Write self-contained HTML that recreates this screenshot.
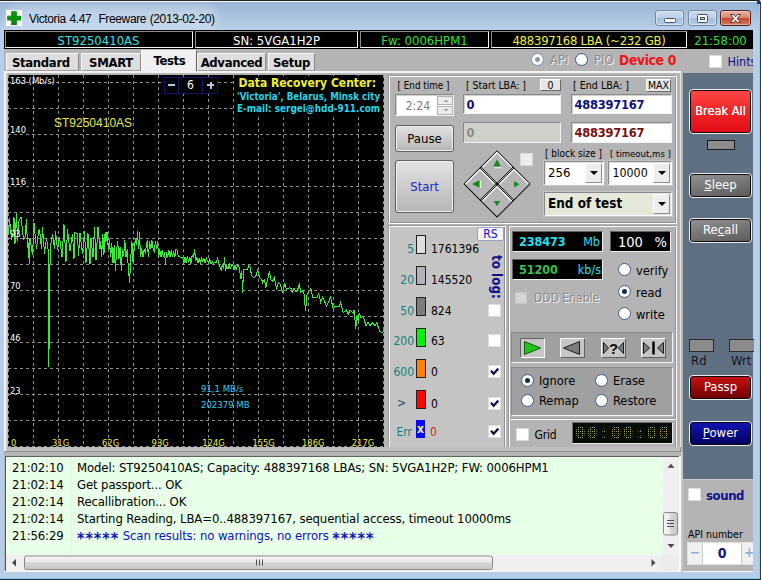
<!DOCTYPE html>
<html lang="en"><head><meta charset="utf-8"><title>Victoria 4.47 Freeware (2013-02-20)</title>
<style>
html,body{margin:0;padding:0;}
body{width:762px;height:580px;overflow:hidden;background:#fff;position:relative;
 font-family:"DejaVu Sans Condensed","DejaVu Sans","Liberation Sans",sans-serif;font-stretch:condensed;font-size:13px;color:#000;}
div,span{box-sizing:border-box;}
.a{position:absolute;white-space:nowrap;}
#win{left:0;top:0;width:761px;height:580px;background:#b6ceea;border-radius:0 3px 0 0;overflow:hidden;}
#frame-top{left:0;top:0;width:761px;height:1px;background:#222;}
#frame-top2{left:0;top:1px;width:760px;height:1px;background:#f4f8fc;}
#frame-right{left:760px;top:3px;width:1px;height:577px;background:#2a3a4c;}
#frame-right2{left:758.5px;top:3px;width:1.5px;height:575px;background:#84d2f0;}
#frame-bot{left:0;top:579px;width:761px;height:1px;background:#1b2a3a;}
#frame-bot2{left:0;top:577.7px;width:760px;height:1.3px;background:#78cce8;}
#titlebar{left:0;top:2px;width:759px;height:28px;background:linear-gradient(#99b4d4,#b9cfe9);}
#client{left:4px;top:30px;width:749px;height:542px;background:#b4b4b4;}
#ttl{left:29px;top:9px;font-family:"Liberation Sans",sans-serif;font-size:12px;letter-spacing:-0.37px;word-spacing:0.6px;color:#000;line-height:20px;}
.sb{background:#000;border:1px solid;border-color:#8c8c8c #f4f4f4 #f4f4f4 #8c8c8c;height:17px;top:31px;text-align:center;font-size:13px;line-height:17px;}
.capb{height:16px;border:1px solid #7488a2;border-radius:3px;background:linear-gradient(#c8d9ee 0%,#bfd2ea 48%,#a6c0de 52%,#b4cbe6 100%);box-shadow:inset 0 0 0 1px rgba(255,255,255,.45);}
.capb svg{position:absolute;left:0;top:0;}
.capx{background:linear-gradient(#e8b0a0 0%,#dc8a76 46%,#c4482e 52%,#d87c60 100%);border-color:#4a2422;box-shadow:inset 0 0 0 1px rgba(255,255,255,.35);}
.tab{top:53px;height:18px;background:#dedede;border:1px solid #f6f6f6;border-right:1px solid #8a8a8a;border-bottom:1px solid #a0a0a0;font-weight:bold;font-size:13px;line-height:17px;letter-spacing:-0.35px;text-align:center;color:#000;}
.tab.act{top:50px;height:22px;background:#f0f0f0;border-bottom:none;border-right:1.5px solid #5c5c5c;line-height:19px;padding-left:1px;}
.radio{width:13px;height:13px;border-radius:50%;background:#fff;border:1px solid #3a5a8a;}
.radio.on::after{content:"";position:absolute;left:3px;top:3px;width:5px;height:5px;border-radius:50%;background:#1a2a4a;}
.emb{color:#8a8a8a;text-shadow:1px 1px 0 #f4f4f4;font-size:13px;line-height:16px;}
.cb{width:13px;height:13px;background:#fff;border:1px solid #dcdcdc;}
.gl{color:#fff;font-size:9.3px;line-height:11px;}
.gx{color:#f0f040;font-size:9.3px;line-height:11px;top:361.5px;}
.b{font-weight:bold;letter-spacing:-0.4px;}
.pnl{border:1px solid;border-color:#989898 #fcfcfc #fcfcfc #989898;box-shadow:inset 1px 1px 0 #fcfcfc,inset -1px -1px 0 #909090;}
.lbl{font-size:10px;line-height:13px;color:#000;}
.sbtn{background:#e6e6e6;border:1px solid;border-color:#fcfcfc #6c6c6c #6c6c6c #fcfcfc;font-size:10.5px;line-height:11px;text-align:center;color:#000;}
.inp{background:#fff;border:1px solid;border-color:#8a8a8a #f4f4f4 #f4f4f4 #8a8a8a;box-shadow:inset 1px 1px 0 #d0d0d0;}
.nv{font-weight:bold;color:#10107a;font-size:12.8px;line-height:17px;letter-spacing:-0.25px;}
.spn{width:16px;height:9px;background:#ececec;border:1px solid #b0b0b0;}
.spn svg{position:absolute;left:0;top:-1px;}
.btn{background:linear-gradient(#e2e2e2,#cccccc 50%,#b6b6b6);border:1px solid #606060;border-radius:3px;box-shadow:inset 0 0 0 1px #f0f0f0;text-align:center;font-size:13px;color:#000;}
.dd{right:1px;top:1px;bottom:1px;width:17px;background:#eeeeee;border:1px solid;border-color:#fdfdfd #8c8c8c #8c8c8c #fdfdfd;}
.dd::after{content:"";position:absolute;left:3.5px;top:7px;border:4px solid transparent;border-top:4.5px solid #000;border-bottom:none;}
.st{color:#108080;font-size:12px;line-height:16px;text-align:right;}
.sv{font-size:12px;line-height:16px;}
.bx{width:10px;height:19px;border:1px solid #202020;}
.ck::after{content:"";position:absolute;left:3px;top:1px;width:4px;height:7px;border:solid #101060;border-width:0 2px 2px 0;transform:rotate(40deg);}
.lcd{background:#000;border:1px solid;border-color:#606060 #f0f0f0 #f0f0f0 #606060;font-size:13px;line-height:16px;}
.rl{font-size:12.7px;line-height:16px;}
.sunk{background:#a0a0a0;border:1px solid;border-color:#8a8a8a #f4f4f4 #f4f4f4 #8a8a8a;}
.pb{width:25px;height:20px;border:1px solid;border-color:#f8f8f8 #606060 #606060 #f8f8f8;background:#c6c6c6;}
.pb.dn{border-color:#606060 #f8f8f8 #f8f8f8 #606060;}
.pb svg{position:absolute;left:-1px;top:-1px;}
.rb{border:1px solid #ececec;border-radius:4px;color:#fff;text-align:center;font-size:13px;box-shadow:inset 0 0 0 1px #0c0c0c;}
.lr{position:absolute;left:0;width:657px;height:17px;border-bottom:1px solid #effff0;font-size:13px;line-height:17px;white-space:nowrap;letter-spacing:-0.12px;}
.lt{position:absolute;left:6px;}
.lm{position:absolute;left:71px;}
.as{letter-spacing:0.9px;font-size:16px;line-height:10px;position:relative;top:3.5px;font-weight:bold;}
.radio.dis::after{background:#8a98ac;}
.radio.dis{border-color:#7890b0;}
.cmb{border-color:#8a8a8a #fafafa #fafafa #8a8a8a;box-shadow:inset 1px 1px 0 #e4e4e4, 0 0 0 1px #c6c6c6;}

</style></head>
<body>
<div id="win" class="a">
<div id="titlebar" class="a"></div>
<div id="frame-top" class="a"></div><div id="frame-top2" class="a"></div>
<div id="frame-right2" class="a"></div><div id="frame-right" class="a"></div>
<div id="frame-bot2" class="a"></div><div class="a" style="left:757px;top:0;width:4px;height:3.5px;background:#1c3a6c;border-radius:0 3px 0 0;"></div><div id="frame-bot" class="a"></div>
<div class="a" style="left:14px;top:13px;width:196px;height:9px;border-radius:8px;background:rgba(255,255,255,.28);box-shadow:0 0 9px 8px rgba(255,255,255,.28);"></div>
<!-- title icon -->
<svg class="a" style="left:6px;top:10px" width="16" height="16" viewBox="0 0 16 16"><rect width="16" height="16" fill="#fdfdfd"/><path d="M5.200 1.200h5.700v4.600H15v4.700h-4.100v4.200H5.200v-4.200H1.100V5.800h4.100z" fill="#0c8e0c"/><path d="M5.700 5.800V1.700h4.700M1.600 10V6.300h3.600" fill="none" stroke="#22a82a" stroke-width="1"/><path d="M5.200 14.200h5.700" fill="none" stroke="#065c06" stroke-width="1"/></svg>
<div id="ttl" class="a">Victoria 4.47&nbsp; Freeware (2013-02-20)</div>
<!-- caption buttons -->
<div class="a capb" style="left:655px;top:10px;width:29px;"><svg width="27" height="14" viewBox="0 0 27 14"><rect x="8.500" y="7.500" width="11" height="4" rx="1" fill="#fff" stroke="#46525e"/></svg></div>
<div class="a capb" style="left:688px;top:10px;width:29px;"><svg width="27" height="14" viewBox="0 0 27 14"><rect x="8.500" y="3.500" width="10" height="8" rx="1" fill="#fff" stroke="#46525e"/><rect x="11.500" y="6.500" width="4" height="2" fill="#b4c8e0" stroke="#46525e" stroke-width="1"/></svg></div>
<div class="a capb capx" style="left:720px;top:10px;width:31px;"><svg width="29" height="14" viewBox="0 0 29 14"><path d="M9.300 3.500h3.200l2 2.300 2-2.300h3.200l-3.600 4 3.600 4h-3.200l-2-2.300-2 2.300H9.300l3.600-4z" fill="#fff" stroke="#53302c" stroke-width="0.9" stroke-linejoin="round"/></svg></div>

<div id="client" class="a"></div>

<!-- status bar -->
<div class="a" style="left:4px;top:30px;width:749px;height:19px;background:#000;"></div>
<div class="a sb" style="left:5px;width:188px;color:#2ee6e6;padding-right:1px;">ST9250410AS</div>
<div class="a sb" style="left:195px;width:163px;color:#fff;">SN: 5VGA1H2P</div>
<div class="a sb" style="left:360px;width:129px;color:#30e030;">Fw: 0006HPM1</div>
<div class="a sb" style="left:491px;width:196px;color:#f0f040;letter-spacing:-0.25px;">488397168 LBA (~232 GB)</div>
<div class="a sb" style="left:688px;width:65px;color:#30e030;border-color:#000;">21:58:00</div>

<!-- tabs -->
<div class="a tab" style="left:6px;width:73px;text-align:left;padding-left:5px;">Standard</div>
<div class="a tab" style="left:81px;width:60px;">SMART</div>
<div class="a tab act" style="left:141px;width:56px;">Tests</div>
<div class="a tab" style="left:197px;width:69px;">Advanced</div>
<div class="a tab" style="left:268px;width:47px;">Setup</div>
<div class="a" style="left:4px;top:71px;width:677px;height:2px;background:#f4f4f4;"></div>
<div class="a" style="left:4px;top:71px;width:2px;height:384px;background:#f4f4f4;"></div>
<div class="a" style="left:6px;top:73px;width:2px;height:382px;background:#c4c4c4;"></div>
<div class="a" style="left:680px;top:72px;width:1px;height:383px;background:#e8e8e8;"></div>

<!-- API / PIO / Device -->
<div class="a radio on dis" style="left:531px;top:53px;"></div>
<div class="a emb" style="left:550px;top:52px;">API</div>
<div class="a radio" style="left:575px;top:53px;"></div>
<div class="a emb" style="left:594px;top:52px;">PIO</div>
<div class="a" style="left:619px;top:51px;font-weight:bold;font-size:13.7px;color:#f01414;line-height:18px;letter-spacing:-0.3px;">Device 0</div>
<div class="a cb" style="left:709px;top:55px;"></div>
<div class="a" style="left:727.500px;top:54px;width:25.500px;overflow:hidden;font-size:12.5px;color:#101090;line-height:16px;">Hints</div>

<!-- graph -->
<div id="graph" class="a" style="left:8px;top:75px;width:376px;height:372px;background:#000;overflow:hidden;">
<svg class="a" style="left:0;top:0" width="377" height="372" viewBox="0 0 377 372">
<g stroke="#8e8e8e" stroke-width="1" stroke-dasharray="3 3" shape-rendering="crispEdges"><line x1="0.5" y1="0" x2="0.5" y2="372"/><line x1="25.5" y1="0" x2="25.5" y2="372"/><line x1="50.5" y1="0" x2="50.5" y2="372"/><line x1="75.5" y1="0" x2="75.5" y2="372"/><line x1="100.5" y1="0" x2="100.5" y2="372"/><line x1="125.5" y1="0" x2="125.5" y2="372"/><line x1="150.5" y1="0" x2="150.5" y2="372"/><line x1="175.5" y1="0" x2="175.5" y2="372"/><line x1="200.5" y1="0" x2="200.5" y2="372"/><line x1="225.5" y1="0" x2="225.5" y2="372"/><line x1="250.5" y1="0" x2="250.5" y2="372"/><line x1="275.5" y1="0" x2="275.5" y2="372"/><line x1="300.5" y1="0" x2="300.5" y2="372"/><line x1="325.5" y1="0" x2="325.5" y2="372"/><line x1="350.5" y1="0" x2="350.5" y2="372"/><line x1="375.5" y1="0" x2="375.5" y2="372"/><line x1="0" y1="7.5" x2="377" y2="7.5"/><line x1="0" y1="33.5" x2="377" y2="33.5"/><line x1="0" y1="59.5" x2="377" y2="59.5"/><line x1="0" y1="85.5" x2="377" y2="85.5"/><line x1="0" y1="111.5" x2="377" y2="111.5"/><line x1="0" y1="137.5" x2="377" y2="137.5"/><line x1="0" y1="163.5" x2="377" y2="163.5"/><line x1="0" y1="189.5" x2="377" y2="189.5"/><line x1="0" y1="215.5" x2="377" y2="215.5"/><line x1="0" y1="241.5" x2="377" y2="241.5"/><line x1="0" y1="267.5" x2="377" y2="267.5"/><line x1="0" y1="293.5" x2="377" y2="293.5"/><line x1="0" y1="319.5" x2="377" y2="319.5"/><line x1="0" y1="345.5" x2="377" y2="345.5"/><line x1="0" y1="371.5" x2="377" y2="371.5"/></g>
<polyline points="0.5,160.3 1.5,143.5 3.5,164.5 5.0,157.9 6.0,142.5 7.0,168.7 8.5,138.1 9.5,166.1 11.0,146.4 13.0,142.1 15.5,164.2 17.0,162.0 18.5,144.2 19.5,173.2 20.5,168.0 21.2,189.0 22.0,163.0 24.5,180.3 26.0,148.3 28.5,173.7 30.5,156.5 31.5,153.9 33.5,174.3 34.5,152.0 36.5,178.5 38.5,162.9 40.2,175.0 40.8,292.0 41.6,225.0 42.2,173.0 44.5,159.5 46.5,173.7 47.5,156.4 49.5,175.0 51.5,161.9 54.0,182.2 56.0,149.5 58.0,186.9 59.5,154.3 62.0,176.3 64.5,158.8 66.0,183.7 67.0,157.7 69.5,158.8 70.5,181.1 72.0,158.3 74.5,179.2 76.5,156.2 78.0,187.8 80.0,158.5 82.0,189.2 83.0,163.3 85.0,182.2 86.5,152.3 88.0,185.4 90.0,152.2 92.0,174.4 92.8,166.5 93.6,182.2 94.8,158.6 95.9,180.3 97.1,157.0 97.9,166.5 99.1,156.7 100.3,174.4 101.4,164.5 102.6,182.2 103.8,168.5 105.0,188.1 106.2,170.4 107.4,196.0 108.5,176.3 109.7,166.5 110.9,184.2 112.1,172.4 113.3,196.0 114.4,174.4 115.6,181.3 116.8,165.5 118.0,182.2 119.2,174.4 120.3,192.1 121.5,207.8 122.7,184.2 123.9,166.5 125.1,188.1 126.3,172.4 127.4,164.5 128.6,170.4 129.4,155.7 130.6,174.4 131.4,156.7 132.6,182.2 133.7,173.4 134.9,182.2 136.1,174.4 137.3,177.3 138.5,170.4 139.2,165.5 140.4,182.2 141.6,166.5 142.8,174.4 144.0,165.5 145.1,173.4 146.3,176.3 147.5,166.5 148.7,174.4 149.5,166.5 150.7,182.2 151.8,174.4 153.0,182.2 154.2,175.4 155.4,182.2 156.6,177.3 157.4,189.1 158.5,177.3 159.7,182.2 160.9,175.4 162.1,182.2 163.3,175.4 164.4,182.2 165.6,176.3 166.8,182.2 168.0,174.4 169.2,175.4 170.3,181.9 174.7,182.2 175.9,189.1 177.0,182.2 178.2,188.1 179.4,181.3 180.6,187.2 181.8,182.2 182.9,189.1 184.1,180.3 185.3,182.2 186.5,174.4 187.7,186.2 188.9,182.2 190.0,188.1 191.2,183.2 192.4,189.1 193.6,182.2 194.8,187.2 195.9,183.2 197.1,188.1 198.3,182.2 199.5,186.6 200.7,188.1 201.8,184.2 203.0,189.1 204.2,186.6 205.4,189.1 206.6,187.2 208.1,188.1 209.7,183.2 210.9,189.1 212.1,192.1 213.3,196.0 214.4,189.1 215.6,194.1 216.4,182.2 217.6,196.0 218.8,191.1 220.0,194.1 221.1,188.1 222.3,194.1 223.5,190.1 224.7,189.1 225.9,195.0 227.0,190.1 228.2,194.1 229.4,191.1 230.6,190.1 231.8,196.0 232.9,203.9 233.7,196.0 234.5,217.7 235.7,194.1 239.6,194.1 240.8,191.1 242.0,192.1 242.8,196.7 243.8,200.6 245.8,202.6 247.7,201.6 249.7,194.7 251.7,202.6 253.7,204.5 254.6,207.5 256.6,204.5 257.6,213.4 259.6,204.5 261.5,195.7 262.5,204.5 264.5,206.5 266.4,202.6 268.4,213.4 270.4,207.5 272.4,209.4 274.3,217.3 276.9,208.5 278.3,214.4 281.2,212.8 283.2,213.4 284.2,217.9 286.1,213.4 288.1,216.7 290.1,213.4 291.4,208.5 292.6,217.3 294.6,215.4 296.0,219.3 297.6,236.0 298.9,220.3 300.9,216.3 302.9,213.4 304.8,222.2 308.8,222.2 310.7,218.3 312.7,227.2 314.7,222.2 318.6,231.1 322.6,222.2 325.5,235.0 326.5,231.1 331.4,231.1 332.4,227.2 335.3,238.0 338.3,235.0 340.3,239.0 342.2,235.0 345.2,238.0 346.2,235.0 347.7,253.7 349.1,240.0 350.1,245.9 351.1,238.0 353.1,242.9 355.0,240.9 358.0,250.8 360.0,246.9 361.9,250.8 364.9,247.8 366.8,250.8 368.8,247.8 371.8,256.7 374.7,257.3 376.7,254.7" fill="none" stroke="#30f030" stroke-width="1" shape-rendering="crispEdges"/>
</svg>
<div class="a gl" style="left:2px;top:0px;">163 (Mb/s)</div>
<div class="a gl" style="left:2px;top:49px;">140</div>
<div class="a gl" style="left:2px;top:101px;">116</div>
<div class="a gl" style="left:2px;top:153px;">93</div>
<div class="a gl" style="left:2px;top:205px;">70</div>
<div class="a gl" style="left:2px;top:257px;">46</div>
<div class="a gl" style="left:2px;top:309.5px;">23</div>
<div class="a gx" style="left:3px;">0</div>
<div class="a gx" style="left:44px;">31G</div>
<div class="a gx" style="left:94px;">62G</div>
<div class="a gx" style="left:143.6px;">93G</div>
<div class="a gx" style="left:194.3px;">124G</div>
<div class="a gx" style="left:244.4px;">155G</div>
<div class="a gx" style="left:294px;">186G</div>
<div class="a gx" style="left:343.8px;">217G</div>
<div class="a" style="left:46px;top:41px;color:#e8e840;font-size:12px;line-height:14px;font-family:'Liberation Sans',sans-serif;">ST9250410AS</div>
<div class="a" style="left:156px;top:2px;width:54px;height:17px;border:1px solid #14146a;background:#000;"></div>
<div class="a" style="left:170px;top:2px;width:25px;height:17px;border-left:1px solid #14146a;border-right:1px solid #14146a;color:#fff;text-align:center;font-size:12px;line-height:17px;">6</div>
<div class="a" style="left:160px;top:9px;width:7px;height:2px;background:#b4c8e8;"></div>
<div class="a" style="left:199px;top:9px;width:7px;height:2px;background:#b4c8e8;"></div><div class="a" style="left:201.5px;top:6.5px;width:2px;height:7px;background:#b4c8e8;"></div>
<div class="a" style="left:227px;top:1px;width:148px;height:38px;background:#000;"></div>
<div class="a" style="left:230.5px;top:1px;color:#f0f030;font-weight:bold;font-size:12px;line-height:15px;">Data Recovery Center:</div>
<div class="a" style="left:229px;top:15.5px;color:#20d8e8;font-weight:bold;font-size:9.7px;line-height:12px;">'Victoria', Belarus, Minsk city</div>
<div class="a" style="left:229px;top:27.5px;color:#20d8e8;font-weight:bold;font-size:9.9px;line-height:12px;">E-mail: sergei@hdd-911.com</div>
<div class="a" style="left:193px;top:308px;color:#30d0f0;font-size:9.5px;line-height:11px;">91,1 MB/s</div>
<div class="a" style="left:193px;top:324px;color:#30d0f0;font-size:9.5px;line-height:11px;">202379 MB</div>
</div>
<!-- right slate strip -->
<div class="a" style="left:683px;top:73px;width:70px;height:406px;background:#607083;"></div>
<!-- main control panel -->
<div class="a pnl" style="left:388px;top:75px;width:289px;height:149px;"></div>
<div class="a lbl" style="left:397.500px;top:79px;font-size:9.8px;">[ End time ]</div>
<div class="a lbl" style="left:466px;top:79px;font-size:10.4px;">[ Start LBA: ]</div>
<div class="a lbl" style="left:573px;top:79px;font-size:10.6px;">[ End LBA: ]</div>
<div class="a sbtn" style="left:540px;top:79px;width:21px;height:12px;">0</div>
<div class="a sbtn" style="left:646px;top:79px;width:25px;height:13px;">MAX</div>
<div class="a inp" style="left:395px;top:94px;width:59px;height:22px;"><span class="a" style="left:9.500px;top:3px;color:#7c7c7c;font-size:12.3px;line-height:16px;">2:24</span>
 <div class="a spn" style="left:41px;top:1px;"><svg width="16" height="9"><path d="M5.500 6L8 3.500 10.500 6z" fill="#a0a0a0"/></svg></div>
 <div class="a spn" style="left:41px;top:11px;"><svg width="16" height="9"><path d="M5.500 3L8 5.500 10.500 3z" fill="#a0a0a0"/></svg></div></div>
<div class="a inp" style="left:463px;top:94px;width:98px;height:20px;"><span class="a nv" style="left:2.500px;top:1px;">0</span></div>
<div class="a inp" style="left:571px;top:94px;width:101px;height:20px;"><span class="a nv" style="left:2.500px;top:1px;">488397167</span></div>
<div class="a btn" style="left:395px;top:125px;width:59px;height:27px;line-height:25px;">Pause</div>
<div class="a inp" style="left:463px;top:122px;width:98px;height:21px;background:#d0d0ca;"><span class="a nv" style="left:2.500px;top:1px;color:#8c8c8c;">0</span></div>
<div class="a inp" style="left:571px;top:122px;width:101px;height:21px;"><span class="a nv" style="left:2.500px;top:1px;color:#7a1010;">488397167</span></div>
<div class="a btn" style="left:395px;top:160px;width:59px;height:53px;line-height:52px;color:#1c1cd0;">Start</div>
<!-- diamond -->
<svg class="a" style="left:461.700px;top:148.500px;" width="70" height="70" viewBox="-35 -35 70 70">
 <g transform="rotate(45)">
  <rect x="-23.300" y="-23.300" width="46.600" height="46.600" fill="#b6b6b6" stroke="#101010" stroke-width="1"/>
  <path d="M-22.300 -1.600V-22.300H-1.600 M1.800 -1.600V-22.300H22.300 M-22.300 22.300V1.800H-1.600 M1.800 22.300V1.800H22.300" fill="none" stroke="#fcfcfc" stroke-width="1.200"/>
  <path d="M-0.700 -23.300V23.300M0.700 -23.300V23.300M-23.300 -0.700H23.300M-23.300 0.700H23.300" stroke="#1a1a1a" stroke-width="0.900"/>
 </g>
 <path d="M-3.300 -16.800h7.600v1h-7.600z M-16.900 -3.300v7.400h1v-7.400z" fill="#f4f4f4"/>
 <path d="M0 -24.400l3.800 7h-7.600z M0 22l3.300 -5h-6.600z M-24.900 0l7.300 -3.700v7.400z M22.300 0.300l-5.200 -3.300v6.600z" fill="#128a1e"/>
</svg>
<div class="a cb" style="left:520px;top:153px;background:#ececec;border-color:#d8d8d8;"></div>
<div class="a lbl" style="left:545px;top:147px;">[ block size ]</div>
<div class="a lbl" style="left:610px;top:147px;font-size:9.5px;">[ timeout,ms ]</div>
<div class="a inp cmb" style="left:544px;top:161px;width:60px;height:24px;"><span class="a" style="left:3px;top:3px;font-size:13px;line-height:16px;">256</span><div class="a dd"></div></div>
<div class="a inp cmb" style="left:608px;top:161px;width:64px;height:24px;"><span class="a" style="left:3.500px;top:3px;font-size:12.3px;line-height:16px;">10000</span><div class="a dd"></div></div>
<div class="a inp cmb" style="left:544px;top:192px;width:128px;height:24px;background:#e6e9da;"><span class="a" style="left:3px;top:3px;font-weight:bold;font-size:13.4px;line-height:16px;">End of test</span><div class="a dd"></div></div>

<!-- stats panel -->
<div class="a pnl" style="left:388px;top:225px;width:118px;height:224px;background:#c4c4c4;"></div>
<div class="a sbtn" style="left:477px;top:227px;width:27px;height:14px;color:#1010c0;font-size:12px;line-height:12px;border-color:#9aa0c0;border-radius:2px;background:#f4f4f8;">RS</div>
<div class="a st" style="left:390px;top:241px;width:24px;">5</div><div class="a bx" style="left:416px;top:235px;background:#dedede;"></div><div class="a sv" style="left:431px;top:241px;">1761396</div>
<div class="a st" style="left:390px;top:272px;width:24px;">20</div><div class="a bx" style="left:416px;top:266px;background:#b2b2b8;"></div><div class="a sv" style="left:431px;top:272px;">145520</div>
<div class="a st" style="left:390px;top:303px;width:24px;">50</div><div class="a bx" style="left:416px;top:297px;background:#7c7c7c;"></div><div class="a sv" style="left:431px;top:303px;">824</div>
<div class="a st" style="left:390px;top:333px;width:24px;">200</div><div class="a bx" style="left:416px;top:328px;background:#08f008;"></div><div class="a sv" style="left:431px;top:333px;">63</div>
<div class="a st" style="left:390px;top:364px;width:24px;">600</div><div class="a bx" style="left:416px;top:359px;background:#ff8008;"></div><div class="a sv" style="left:431px;top:364px;">0</div>
<div class="a st" style="left:397px;top:395px;width:10px;text-align:left;color:#205060;">&gt;</div><div class="a bx" style="left:416px;top:390px;background:#f80808;"></div><div class="a sv" style="left:431px;top:396px;">0</div>
<div class="a st" style="left:390px;top:424px;width:22px;">Err</div><div class="a bx" style="left:416px;top:420px;width:9px;height:18px;background:#0808f0;border:none;color:#f0f060;font-weight:bold;font-size:12px;line-height:19px;text-align:center;">x</div><div class="a sv" style="left:430px;top:424px;color:#e82020;">0</div>
<div class="a" style="left:488px;top:255px;width:16px;height:44px;writing-mode:vertical-rl;color:#10108a;font-weight:bold;font-size:13.3px;line-height:16px;letter-spacing:0;">to log:</div>
<div class="a cb" style="left:488px;top:304px;"></div>
<div class="a cb" style="left:488px;top:334px;"></div>
<div class="a cb" style="left:488px;top:365px;"><svg class="a" style="left:0;top:0" width="11" height="11" viewBox="0 0 11 11"><path d="M2 4.800L4.600 7.700 9.300 2.600" fill="none" stroke="#14144c" stroke-width="2.300"/></svg></div>
<div class="a cb" style="left:488px;top:397px;"><svg class="a" style="left:0;top:0" width="11" height="11" viewBox="0 0 11 11"><path d="M2 4.800L4.600 7.700 9.300 2.600" fill="none" stroke="#14144c" stroke-width="2.300"/></svg></div>
<div class="a cb" style="left:488px;top:425px;"><svg class="a" style="left:0;top:0" width="11" height="11" viewBox="0 0 11 11"><path d="M2 4.800L4.600 7.700 9.300 2.600" fill="none" stroke="#14144c" stroke-width="2.300"/></svg></div>

<!-- mid panel -->
<div class="a pnl" style="left:508px;top:225px;width:169px;height:224px;"></div>
<div class="a lcd" style="left:512px;top:231px;width:91px;height:21px;"><span class="a b" style="left:6px;top:2px;color:#20e0f0;font-size:12.6px;letter-spacing:-0.15px;">238473</span><span class="a" style="right:2px;top:2px;color:#20e0f0;font-size:12.5px;">Mb</span></div>
<div class="a lcd" style="left:610px;top:231px;width:61px;height:21px;"><span class="a" style="left:7px;top:2px;color:#fff;font-size:14.5px;">100</span><span class="a" style="right:3px;top:2px;color:#fff;font-size:14.5px;">%</span></div>
<div class="a lcd" style="left:512px;top:259px;width:91px;height:21px;"><span class="a b" style="left:6px;top:2px;color:#38c048;font-size:12.6px;letter-spacing:-0.15px;">51200</span><span class="a" style="right:1px;top:2px;color:#20e0f0;font-size:12.5px;">kb/s</span></div>
<div class="a radio" style="left:618px;top:263px;"></div><div class="a rl" style="left:636px;top:263px;">verify</div>
<div class="a radio on" style="left:618px;top:285px;"></div><div class="a rl" style="left:636px;top:285px;">read</div>
<div class="a radio" style="left:618px;top:307px;"></div><div class="a rl" style="left:636px;top:307px;">write</div>
<div class="a cb" style="left:515px;top:292px;width:12px;height:12px;background:#d4d4d4;border-color:#c4c4c4;"></div>
<div class="a emb" style="left:534px;top:290px;font-size:12px;">DDD Enable</div>
<div class="a sunk" style="left:511px;top:332px;width:162px;height:31px;"></div>
<div class="a pb dn" style="left:520px;top:338px;"><svg width="25" height="20"><path d="M4.500 3.500L20.500 10 4.500 16.500z" fill="#1cc41c" stroke="#0c5c0c" stroke-width="1"/></svg></div>
<div class="a pb" style="left:560px;top:338px;"><svg width="25" height="20"><path d="M19.500 3.500L3.500 10 19.500 16.500z" fill="#7c7c7c" stroke="#1c1c1c" stroke-width="1"/></svg></div>
<div class="a pb" style="left:601px;top:338px;"><svg width="25" height="20"><path d="M2.500 4.500L7.500 10 2.500 15.500z M22.500 4.500L17.500 10 22.500 15.500z" fill="#7c7c7c" stroke="#1c1c1c" stroke-width="1"/><text x="12.500" y="15.500" font-size="15" font-weight="bold" text-anchor="middle" fill="#0c0c0c" font-family="Liberation Sans, sans-serif">?</text></svg></div>
<div class="a pb" style="left:641px;top:338px;"><svg width="25" height="20"><path d="M2.500 4.500L8.500 10 2.500 15.500z M22.500 4.500L16.500 10 22.500 15.500z" fill="#7c7c7c" stroke="#1c1c1c" stroke-width="1"/><path d="M12.500 3.500v13" stroke="#0c0c0c" stroke-width="2.600"/></svg></div>
<div class="a sunk" style="left:511px;top:367px;width:162px;height:49px;"></div>
<div class="a radio on" style="left:521px;top:374px;"></div><div class="a rl" style="left:539px;top:373px;">Ignore</div>
<div class="a radio" style="left:595px;top:374px;"></div><div class="a rl" style="left:613px;top:373px;">Erase</div>
<div class="a radio" style="left:521px;top:394px;"></div><div class="a rl" style="left:539px;top:393px;">Remap</div>
<div class="a radio" style="left:595px;top:394px;"></div><div class="a rl" style="left:613px;top:393px;">Restore</div>
<div class="a" style="left:510px;top:418px;width:166px;height:2px;border-top:1px solid #989898;border-bottom:1px solid #fcfcfc;"></div>
<div class="a cb" style="left:516px;top:428px;"></div><div class="a rl" style="left:534.500px;top:427px;font-size:12px;letter-spacing:-0.2px;">Grid</div>
<div class="a lcd" style="left:572px;top:422px;width:101px;height:22px;background:#060c06;border-color:#707070 #e8e8e8 #e8e8e8 #707070;"><span class="a" style="left:2px;top:1px;color:#b4bc6c;font-family:'DejaVu Sans Mono','Liberation Mono',monospace;font-weight:bold;font-size:17.5px;line-height:18px;letter-spacing:1.4px;">00:00:00</span><div class="a" style="left:0;top:0;width:99px;height:20px;background:repeating-linear-gradient(0deg,#060c06 0,#060c06 1.1px,transparent 1.1px,transparent 2px),repeating-linear-gradient(90deg,#060c06 0,#060c06 1.1px,transparent 1.1px,transparent 2px);"></div></div>

<!-- right strip controls -->
<div class="a rb" style="left:689px;top:89px;width:63px;height:45px;line-height:42px;background:linear-gradient(#ff4848,#f02828 45%,#e00c18);font-size:12.7px;text-shadow:0 0 0.6px #fff;">Break All</div>
<div class="a" style="left:707px;top:140px;width:28px;height:10px;background:#8c8c8c;border:1px solid #1a1a1a;"></div>
<div class="a rb" style="left:689px;top:173px;width:63px;height:25px;line-height:22px;background:linear-gradient(170deg,#929292,#5a5a5a);"><u>S</u>leep</div>
<div class="a rb" style="left:689px;top:218px;width:63px;height:25px;line-height:22px;background:linear-gradient(170deg,#929292,#5a5a5a);">Re<u>c</u>all</div>
<div class="a" style="left:689px;top:339px;width:25px;height:13px;background:#8c8c8c;border:1px solid #2a2a2a;"></div>
<div class="a" style="left:729px;top:339px;width:25px;height:13px;background:#8c8c8c;border:1px solid #2a2a2a;border-right:none;"></div>
<div class="a" style="left:691px;top:353px;color:#141420;font-size:13px;line-height:16px;">Rd</div>
<div class="a" style="left:731px;top:353px;width:22px;overflow:hidden;color:#141420;font-size:13px;line-height:16px;">Wrt</div>
<div class="a rb" style="left:689px;top:375px;width:63px;height:25px;line-height:22px;background:linear-gradient(#c81414,#6c0000);">Passp</div>
<div class="a rb" style="left:689px;top:421px;width:63px;height:25px;line-height:22px;background:linear-gradient(#1414b8,#00005c);"><u>P</u>ower</div>

<!-- log -->
<div class="a" style="left:6px;top:447px;width:674px;height:4px;background:#bebebe;"></div>
<div class="a" style="left:4px;top:451px;width:677px;height:1px;background:#909090;"></div>
<div class="a" style="left:680px;top:447px;width:1px;height:5px;background:#909090;"></div>
<div class="a" style="left:4px;top:452px;width:679px;height:4px;background:#b4b4b4;"></div>
<div class="a" style="left:5px;top:456px;width:674px;height:1px;background:#606060;"></div>
<div id="log" class="a" style="left:6px;top:457px;width:657px;height:98px;background:#e8ffe8;overflow:hidden;">
<div class="a" style="left:65px;top:0;width:1px;height:98px;background:#e0f6e0;"></div>
<div class="lr" style="top:2px;"><span class="lt">21:02:10</span><span class="lm">Model: ST9250410AS; Capacity: 488397168 LBAs; SN: 5VGA1H2P; FW: 0006HPM1</span></div>
<div class="lr" style="top:19px;"><span class="lt">21:02:14</span><span class="lm">Get passport... OK</span></div>
<div class="lr" style="top:36px;"><span class="lt">21:02:14</span><span class="lm">Recallibration... OK</span></div>
<div class="lr" style="top:53px;"><span class="lt">21:02:14</span><span class="lm">Starting Reading, LBA=0..488397167, sequential access, timeout 10000ms</span></div>
<div class="lr" style="top:70px;"><span class="lt">21:56:29</span><span class="lm" style="color:#1010c0;"><span class="as">*****</span> Scan results: no warnings, no errors <span class="as">*****</span></span></div>
</div>
<div class="a" style="left:5px;top:456px;width:1px;height:116px;background:#585858;"></div>
<!-- v scrollbar -->
<div class="a" style="left:663px;top:457px;width:16px;height:98px;background:#f0f0f0;"></div>
<svg class="a" style="left:663px;top:457px;" width="16" height="98"><defs><linearGradient id="vg" x1="0" y1="0" x2="1" y2="0"><stop offset="0" stop-color="#f6f6f6"/><stop offset="0.45" stop-color="#e8e8e8"/><stop offset="0.5" stop-color="#d6d6d6"/><stop offset="1" stop-color="#c8c8c8"/></linearGradient></defs><path d="M4.500 10.800L8 6.800 11.500 10.800z M4.500 87L8 91 11.500 87z" fill="#484848"/><rect x="0.500" y="55.500" width="14" height="22.500" rx="2" fill="url(#vg)" stroke="#8a8a8a"/><path d="M4 63.500h7M4 66.500h7M4 69.500h7" stroke="#505050"/></svg>
<!-- h scrollbar -->
<div class="a" style="left:6px;top:555px;width:673px;height:16px;background:#f0f0f0;"></div>
<div class="a" style="left:661px;top:555px;width:18px;height:16px;background:#ececec;"></div>
<svg class="a" style="left:6px;top:555px;" width="673" height="16"><defs><linearGradient id="hg" x1="0" y1="0" x2="0" y2="1"><stop offset="0" stop-color="#f6f6f6"/><stop offset="0.45" stop-color="#e8e8e8"/><stop offset="0.5" stop-color="#d6d6d6"/><stop offset="1" stop-color="#c8c8c8"/></linearGradient></defs><path d="M10 4L6 7.700 10 11.500z M645.500 4L649.500 7.700 645.500 11.500z" fill="#484848"/><rect x="18.500" y="1" width="468" height="13.500" rx="2" fill="url(#hg)" stroke="#8a8a8a"/><path d="M250.500 4.500v6M253.500 4.500v6M256.500 4.500v6" stroke="#505050"/></svg>
<div class="a" style="left:4px;top:571px;width:749px;height:1px;background:#f4f4f4;"></div>
<!-- right bottom panel -->
<div class="a" style="left:679px;top:456px;width:2px;height:116px;background:#f8f8f8;"></div><div class="a" style="left:681px;top:452px;width:2px;height:120px;background:#c4c8cc;"></div>
<div class="a" style="left:683px;top:571px;width:70px;height:1px;background:#f8f8f8;"></div>
<div class="a" style="left:683px;top:479px;width:70px;height:1px;background:#c8c8c8;"></div>
<div class="a cb" style="left:688px;top:488px;"></div>
<div class="a b" style="left:706px;top:488px;color:#10108a;font-size:13px;line-height:16px;">sound</div>
<div class="a" style="left:688px;top:527.5px;font-size:10.5px;line-height:13px;">API number</div>
<div class="a" style="left:687px;top:542px;width:66px;height:23px;background:#fff;border:1px solid #e0e0e0;"></div>
<div class="a" style="left:688px;top:543px;width:15px;height:21px;background:#f0f0f0;border-right:1px solid #c8c8c8;color:#90b0d8;font-weight:bold;text-align:center;line-height:19px;font-size:14px;">&#8722;</div>
<div class="a" style="left:741px;top:543px;width:12px;height:21px;background:#f0f0f0;border-left:1px solid #c8c8c8;color:#90b0d8;font-weight:bold;text-align:left;padding-left:2px;line-height:19px;font-size:14px;overflow:hidden;">+</div>
<div class="a b" style="left:703px;top:543px;width:38px;text-align:center;color:#10108a;font-size:14px;line-height:21px;">0</div>
</div>

</body></html>
